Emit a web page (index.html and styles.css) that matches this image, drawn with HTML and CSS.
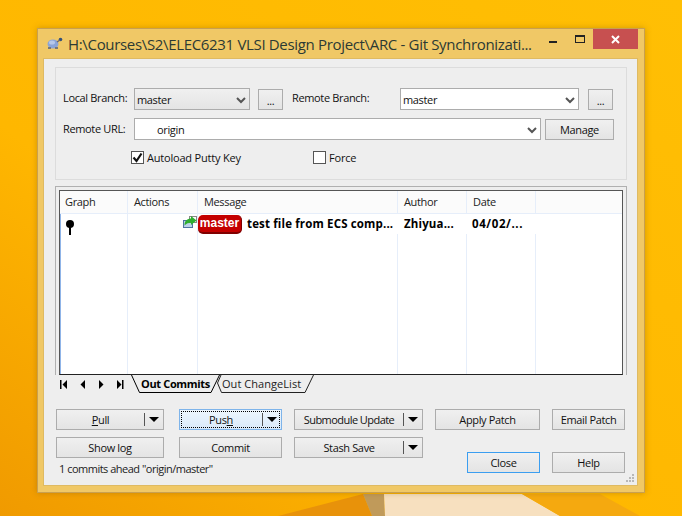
FILE: index.html
```html
<!DOCTYPE html>
<html lang="en">
<head>
    <meta charset="UTF-8">
    <title>Git Synchronization</title>
    <link rel="stylesheet" href="styles.css">
</head>
<body>
    <svg class="wallpaper" width="682" height="516" viewBox="0 0 682 516">
        <polygon points="278,516 363,494 372,516" fill="#e8920a"/>
        <polygon points="363,494 384,494 385,516 372,516" fill="#c09a5a"/>
        <polygon points="384,494 522,494 560,516 385,516" fill="#f7e0bf"/>
        <polygon points="522,494 600,494 640,516 560,516" fill="#f5a90f"/>
    </svg>

    <div class="window">
        <div class="titlebar">
            <svg class="turtle" width="17" height="14" viewBox="0 0 17 14">
                <ellipse cx="7" cy="7" rx="5.5" ry="4.5" fill="#8aa4d8"/>
                <ellipse cx="6" cy="5.5" rx="3" ry="2" fill="#b6c8ea"/>
                <circle cx="14.5" cy="2.5" r="1.8" fill="#33507a"/>
                <path d="M11 5 L14 3" stroke="#667" stroke-width="1.5"/>
                <path d="M2 11 h3 M9 11 h3" stroke="#777" stroke-width="2"/>
            </svg>
            <span class="title">H:\Courses\S2\ELEC6231 VLSI Design Project\ARC - Git Synchronizati...</span>
            <div class="win-btn"><i class="win-min"></i></div>
            <div class="win-btn"><i class="win-max"></i></div>
            <div class="win-close">
                <svg width="9" height="9" viewBox="0 0 9 9"><path d="M1 1 L8 8 M8 1 L1 8" stroke="#fff" stroke-width="2"/></svg>
            </div>
        </div>

        <div class="client">
            <div class="group">
                <div class="form-row">
                    <label class="lbl lbl-local lbl-up">Local Branch:</label>
                    <div class="combo combo-grey combo-local">master
                        <svg class="chev" width="10" height="7" viewBox="0 0 10 7"><path d="M1 1 L5 5 L9 1" fill="none" stroke="#555" stroke-width="2"/></svg>
                    </div>
                    <button class="btn btn-dots">...</button>
                    <label class="lbl lbl-remote lbl-up">Remote Branch:</label>
                    <div class="combo combo-remote">master
                        <svg class="chev" width="10" height="7" viewBox="0 0 10 7"><path d="M1 1 L5 5 L9 1" fill="none" stroke="#555" stroke-width="2"/></svg>
                    </div>
                    <button class="btn btn-dots btn-dots-r">...</button>
                </div>
                <div class="form-row row-url">
                    <label class="lbl lbl-local">Remote URL:</label>
                    <div class="combo combo-url">origin
                        <svg class="chev" width="10" height="7" viewBox="0 0 10 7"><path d="M1 1 L5 5 L9 1" fill="none" stroke="#555" stroke-width="2"/></svg>
                    </div>
                    <button class="btn btn-manage">Manage</button>
                </div>
                <div class="form-row row-checks">
                    <span class="check">
                        <svg width="11" height="11" viewBox="0 0 11 11"><path d="M1.5 5.5 L4.5 9 L9.5 1.5" fill="none" stroke="#111" stroke-width="2.2"/></svg>
                    </span>
                    <span class="check-text check-text-auto">Autoload Putty Key</span>
                    <span class="check"></span>
                    <span class="check-text">Force</span>
                </div>
            </div>

            <div class="list-outer">
                <div class="list">
                    <div class="cell head head-graph">Graph</div>
                    <div class="cell head">Actions</div>
                    <div class="cell head">Message</div>
                    <div class="cell head">Author</div>
                    <div class="cell head">Date</div>
                    <div class="cell head"></div>

                    <div class="cell body body-graph">
                        <svg class="node" width="10" height="16" viewBox="0 0 10 16"><circle cx="5" cy="5" r="4" fill="#000"/><rect x="4" y="5" width="2" height="11" fill="#000"/></svg>
                    </div>
                    <div class="cell body body-actions">
                        <svg class="push-icon" width="14" height="12" viewBox="0 0 14 12">
                            <rect x="0.5" y="4.5" width="9" height="7" fill="#bcd2ea" stroke="#4f72a0"/>
                            <rect x="6.5" y="0.5" width="7" height="6" fill="#fff" stroke="#888"/>
                            <path d="M1.5 9.5 C1.5 4.5 4.5 2.5 8 2.5 V0 L13.5 4.5 L8 9 V6.8 C5.5 6.8 3.5 7.5 1.5 9.5 Z" fill="#2fae2f"/>
                        </svg>
                    </div>
                    <div class="cell body"><div class="row-fill row-msg"><span class="badge">master</span><span class="commit">test file from ECS comp...</span></div></div>
                    <div class="cell body"><div class="row-fill commit">Zhiyua...</div></div>
                    <div class="cell body"><div class="row-fill commit commit-date">04/02/...</div></div>
                    <div class="cell body"></div>
                </div>
            </div>

            <div class="tabs">
                <div class="tab-nav">
                    <svg width="8" height="9" viewBox="0 0 8 9"><path d="M0 0 h1.5 v9 h-1.5 Z M7 0 v9 L2.5 4.5 Z" fill="#000"/></svg>
                    <svg width="8" height="9" viewBox="0 0 8 9"><path d="M6 0 v9 L1.5 4.5 Z" fill="#000"/></svg>
                    <svg width="8" height="9" viewBox="0 0 8 9"><path d="M2 0 v9 L6.5 4.5 Z" fill="#000"/></svg>
                    <svg width="8" height="9" viewBox="0 0 8 9"><path d="M1 0 v9 L5.5 4.5 Z M6 0 h1.5 v9 h-1.5 Z" fill="#000"/></svg>
                </div>
                <div class="tab tab-active">
                    <svg class="tab-shape" width="90" height="18" viewBox="0 0 90 18"><path d="M0.5 0 L8.5 17.5 H80 L88.5 0" fill="none" stroke="#000"/></svg>
                    Out Commits
                </div>
                <div class="tab tab-other">
                    <svg class="tab-shape" width="97" height="18" viewBox="0 0 97 18"><path d="M4 0 L0.5 8 L4.5 17.5 H88 L96.5 0" fill="none" stroke="#222"/></svg>
                    Out ChangeList
                </div>
            </div>

            <div class="actions">
                <button class="btn split w-pull"><span class="split-text"><u>P</u>ull</span><span class="split-arrow"><i></i></span></button>
                <button class="btn split btn-focus w-push"><span class="split-text">Pus<u>h</u></span><span class="split-arrow"><i></i></span></button>
                <button class="btn split w-sub"><span class="split-text split-text-tight">Submodule Update</span><span class="split-arrow"><i></i></span></button>
                <button class="btn w-apply">Apply Patch</button>
                <button class="btn w-email">Email Patch</button>

                <button class="btn w-pull">Show log</button>
                <button class="btn w-push">Commit</button>
                <button class="btn split w-sub"><span class="split-text">Stash Save</span><span class="split-arrow"><i></i></span></button>
                <button class="btn btn-default w-apply-close">Close</button>
                <button class="btn w-help">Help</button>

                <div class="status">1 commits ahead "origin/master"</div>
            </div>

            <svg class="grip" width="8" height="8" viewBox="0 0 8 8" fill="#b8b8b8">
                <rect x="6" y="0" width="2" height="2"/><rect x="3" y="3" width="2" height="2"/><rect x="6" y="3" width="2" height="2"/>
                <rect x="0" y="6" width="2" height="2"/><rect x="3" y="6" width="2" height="2"/><rect x="6" y="6" width="2" height="2"/>
            </svg>
        </div>
    </div>
</body>
</html>
```

FILE: styles.css
```css
* {
    box-sizing: border-box;
}

body {
    margin: 0;
    width: 682px;
    height: 516px;
    position: relative;
    overflow: hidden;
    background: linear-gradient(to top right, #f09a00 0%, #ffb700 38%, #ffbf04 100%);
    font-family: "Open Sans", "Liberation Sans", sans-serif;
    font-size: 11px;
    letter-spacing: -0.35px;
    color: #111;
}

.wallpaper {
    position: absolute;
    left: 0;
    top: 0;
}

.window {
    position: absolute;
    left: 37px;
    top: 28px;
    width: 608px;
    height: 465px;
    padding: 0 6px 6px 5px;
    background: #f0c866;
    border: 1px solid #c8a050;
    box-shadow: 0 0 6px rgba(120, 80, 0, 0.35);
    display: flex;
    flex-direction: column;
}

/* title bar */
.titlebar {
    height: 29px;
    display: flex;
    align-items: flex-start;
    flex: none;
}

.turtle {
    margin: 8px 0 0 3px;
    flex: none;
}

.title {
    margin: 4px 0 0 5px;
    width: 472px;
    font-size: 15px;
    line-height: 22px;
    letter-spacing: -0.33px;
    color: #2c3a34;
    white-space: nowrap;
}

.win-btn {
    width: 26px;
    height: 20px;
    display: flex;
    align-items: center;
    justify-content: center;
}

.win-min {
    width: 8px;
    height: 2px;
    margin-top: 5px;
    background: #222;
}

.win-max {
    width: 10px;
    height: 8px;
    margin-left: 2px;
    border: 1px solid #222;
    border-top-width: 2px;
}

.win-close {
    width: 45px;
    height: 20px;
    margin-left: auto;
    background: #c75050;
    display: flex;
    align-items: center;
    justify-content: center;
}

.client {
    flex: 1;
    position: relative;
    background: #eeeeee;
    border: 1px solid #dfba62;
    padding: 8px 10px 0 11px;
}

/* top group */
.group {
    height: 113px;
    border: 1px solid #dcdcdc;
    padding: 20px 0 0 7px;
}

.form-row {
    display: flex;
    align-items: center;
    height: 22px;
}

.row-url {
    margin-top: 8px;
}

.row-checks {
    margin-top: 10px;
    height: 14px;
    padding-left: 68px;
}

.lbl {
    flex: none;
    white-space: nowrap;
    line-height: 20px;
}

.lbl-up {
    margin-bottom: 2px;
}

.lbl-local {
    width: 71px;
}

.lbl-remote {
    width: 108px;
    margin-left: 9px;
}

.combo {
    height: 22px;
    flex: none;
    position: relative;
    border: 1px solid #acacac;
    background: #fff;
    padding-left: 2px;
    line-height: 21px;
}

.combo-grey {
    background: linear-gradient(#f0f0f0, #e4e4e4);
}

.combo-local {
    width: 116px;
}

.combo-remote {
    width: 179px;
}

.combo-url {
    width: 407px;
    padding-left: 22px;
}

.chev {
    position: absolute;
    right: 3px;
    top: 8px;
}

.btn {
    height: 21px;
    padding: 0;
    border: 1px solid #acacac;
    background: linear-gradient(#f0f0f0, #e4e4e4);
    font: inherit;
    letter-spacing: inherit;
    color: inherit;
    flex: none;
}

.btn-dots {
    width: 25px;
    margin-left: 8px;
    line-height: 21px;
}

.btn-dots-r {
    margin-left: 9px;
}

.btn-manage {
    width: 69px;
    margin-left: 4px;
}

.check {
    width: 13px;
    height: 13px;
    flex: none;
    border: 1px solid #555;
    background: #fff;
    display: flex;
    align-items: center;
    justify-content: center;
}

.check-text {
    margin-left: 3px;
    letter-spacing: -0.2px;
}

.check-text-auto {
    width: 166px;
}

/* commit list */
.list-outer {
    margin-top: 6px;
    height: 189px;
    border: 1px solid #b0b0b0;
    border-bottom: 0;
    padding: 3px 3px 0 3px;
}

.list {
    height: 100%;
    display: grid;
    grid-template-columns: 68px 70px 200px 69px 69px 1fr;
    grid-template-rows: 23px 1fr;
    background: #fff;
    border: 1px solid #555;
    border-bottom: 1px solid #222;
}

.cell {
    border-right: 1px solid #e6eefa;
    min-width: 0;
    white-space: nowrap;
}

.cell:nth-child(6n) {
    border-right: 0;
}

.head {
    background: #fbfbfb;
    border-bottom: 1px solid #e6eefa;
    padding-left: 6px;
    line-height: 22px;
    color: #222;
}

.head-graph {
    padding-left: 5px;
}

.body-graph {
    border-left: 1px solid #8fb4e8;
    padding: 5px 0 0 4px;
}

.node {
    display: block;
}

.body-actions {
    display: flex;
    justify-content: flex-end;
    padding: 2px 0 0 0;
    align-items: flex-start;
}

.row-fill {
    height: 20px;
    background: #fff;
    margin-right: -1px;
    padding-left: 6px;
    line-height: 20px;
}

.row-msg {
    display: flex;
    padding-left: 0;
    align-items: center;
}

.badge {
    width: 44px;
    height: 19px;
    flex: none;
    margin-right: 5px;
    border-radius: 5px;
    background: #c40000;
    border-bottom: 2px solid #800000;
    border-right: 1px solid #800000;
    color: #fff;
    font-family: "Liberation Sans", sans-serif;
    font-weight: bold;
    font-size: 12px;
    letter-spacing: 0;
    line-height: 17px;
    text-align: center;
}

.commit {
    font-weight: bold;
    font-size: 11.5px;
    letter-spacing: 0.15px;
    color: #000;
}

.commit-date {
    padding-left: 5px;
    letter-spacing: 0.6px;
}

/* tab strip */
.tabs {
    height: 18px;
    display: flex;
}

.tab-nav {
    width: 76px;
    flex: none;
    padding: 5px 0 0 5px;
    display: flex;
    gap: 10.5px;
    align-items: flex-start;
}

.tab {
    position: relative;
    flex: none;
    line-height: 18px;
}

.tab-shape {
    position: absolute;
    left: 0;
    top: 0;
}

.tab-active {
    width: 89px;
    padding-left: 10px;
    font-weight: bold;
    color: #000;
}

.tab-other {
    width: 97px;
    margin-left: -3px;
    padding-left: 5px;
    letter-spacing: 0.05px;
    color: #222;
}

/* buttons */
.actions {
    margin: 16px 0 0 1px;
    display: grid;
    grid-template-columns: 123px 115px 141px 117px 73px;
    grid-template-rows: 28px 21px 18px;
}

.actions .btn {
    align-self: start;
}

.split {
    display: flex;
    align-items: center;
}

.split-text {
    flex: 1;
    text-align: center;
}

.split-text-tight {
    letter-spacing: -0.55px;
}

.split-arrow {
    width: 19px;
    height: 13px;
    flex: none;
    border-left: 1px solid #555;
    display: flex;
    align-items: center;
    justify-content: center;
}

.split-arrow i {
    width: 0;
    height: 0;
    border-style: solid;
    border-width: 5px 5px 0 5px;
    border-color: #000 transparent transparent transparent;
}

.w-pull {
    width: 108px;
}

.w-push {
    width: 103px;
}

.w-sub {
    width: 129px;
}

.w-apply {
    width: 105px;
}

.w-email {
    width: 73px;
}

.btn-focus {
    background: linear-gradient(#eef6fd, #d9eafa);
    border-color: #7eb4ea;
    outline: 1px dotted #000;
    outline-offset: -3px;
}

.actions .w-apply-close {
    grid-column: 4;
    grid-row: 2 / 4;
    align-self: end;
    justify-self: end;
    width: 73px;
    margin: 0 12px 3px 0;
}

.actions .w-help {
    grid-column: 5;
    grid-row: 2 / 4;
    align-self: end;
    width: 73px;
    margin-bottom: 3px;
}

.btn-default {
    border-color: #3b9ef0;
}

.status {
    grid-column: 1 / 4;
    grid-row: 3;
    align-self: end;
    padding-left: 3px;
    line-height: 14px;
    letter-spacing: -0.5px;
    color: #222;
}

.grip {
    position: absolute;
    right: 3px;
    bottom: 3px;
}
```
